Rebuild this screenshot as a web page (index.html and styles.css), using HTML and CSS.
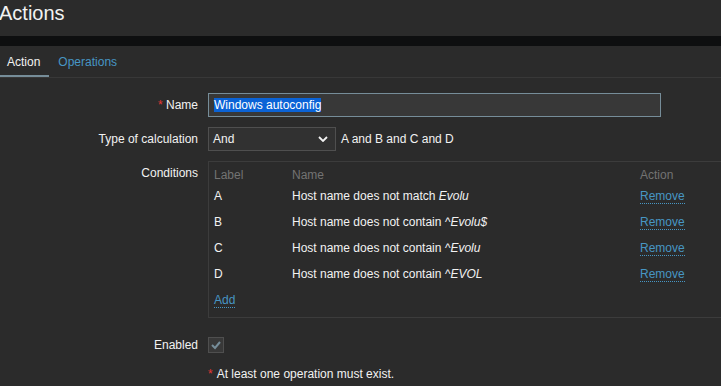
FILE: index.html
```html
<!DOCTYPE html>
<html lang="en">
<head>
    <meta charset="UTF-8">
    <meta name="viewport" content="width=device-width, initial-scale=1.0">
    <title>Actions</title>
    <link rel="stylesheet" href="styles.css">
</head>
<body>
    <header class="page-header">
        <h1 class="page-title">Actions</h1>
    </header>
    <div class="band"></div>
    <nav class="tabs">
        <a class="tab active">Action</a>
        <a class="tab">Operations</a>
    </nav>
    <form class="form">
        <div class="row">
            <label class="label"><span class="req">*</span> Name</label>
            <div class="field">
                <div class="input"><span class="sel">Windows autoconfig</span></div>
            </div>
        </div>
        <div class="row">
            <label class="label">Type of calculation</label>
            <div class="field">
                <div class="select">
                    <span>And</span>
                    <svg class="chevron" width="10" height="6" viewBox="0 0 10 6"><polyline points="1,1 5,5 9,1" fill="none" stroke="#f2f2f2" stroke-width="1.8"/></svg>
                </div>
                <span class="formula">A and B and C and D</span>
            </div>
        </div>
        <div class="row row-top">
            <label class="label label-top">Conditions</label>
            <div class="field">
                <div class="conditions">
                    <table>
                        <thead>
                            <tr><th class="c-label">Label</th><th class="c-name">Name</th><th class="c-action">Action</th></tr>
                        </thead>
                        <tbody>
                            <tr><td>A</td><td>Host name does not match <em>Evolu</em></td><td><a class="link">Remove</a></td></tr>
                            <tr><td>B</td><td>Host name does not contain <em>^Evolu$</em></td><td><a class="link">Remove</a></td></tr>
                            <tr><td>C</td><td>Host name does not contain <em>^Evolu</em></td><td><a class="link">Remove</a></td></tr>
                            <tr><td>D</td><td>Host name does not contain <em>^EVOL</em></td><td><a class="link">Remove</a></td></tr>
                            <tr><td colspan="3"><a class="link">Add</a></td></tr>
                        </tbody>
                    </table>
                </div>
            </div>
        </div>
        <div class="row row-enabled">
            <label class="label">Enabled</label>
            <div class="field">
                <span class="checkbox">
                    <svg width="14" height="14" viewBox="0 0 14 14"><polyline points="3,7 6,10 11,4" fill="none" stroke="#768d99" stroke-width="2"/></svg>
                </span>
            </div>
        </div>
        <div class="row row-note">
            <span class="label"></span>
            <div class="field note"><span class="req">*</span> At least one operation must exist.</div>
        </div>
    </form>
</body>
</html>
```

FILE: styles.css
```css
* {
    margin: 0;
    padding: 0;
    box-sizing: border-box;
}
body {
    font-family: "Liberation Sans", Arial, sans-serif;
    font-size: 12px;
    line-height: 14px;
    color: #f2f2f2;
    background: #2b2b2b;
    overflow: hidden;
    width: 721px;
    height: 386px;
}
.page-header {
    height: 36px;
    padding-top: 1px;
}
.page-title {
    font-size: 20px;
    line-height: 24px;
    font-weight: normal;
    margin-left: -1px;
}
.band {
    height: 10px;
    background: #0e0f10;
}
.tabs {
    display: flex;
    margin-left: -2px;
    border-bottom: 1px solid #383838;
}
.tab {
    padding: 9px 9px 6px;
    border-bottom: 2px solid transparent;
    color: #4796c4;
}
.tab.active {
    color: #f2f2f2;
    border-bottom-color: #768d99;
}
.form {
    padding-top: 15px;
}
.row {
    display: flex;
    align-items: center;
    margin-bottom: 10px;
}
.row-top {
    align-items: flex-start;
}
.label {
    width: 198px;
    text-align: right;
    flex-shrink: 0;
}
.label-top {
    padding-top: 5px;
}
.req {
    color: #e33734;
}
.field {
    margin-left: 10px;
    display: flex;
    align-items: center;
    gap: 5px;
}
.input {
    width: 453px;
    height: 24px;
    border: 1px solid #768d99;
    background: #383838;
    padding: 4px 5px;
}
.sel {
    background: #0b63d6;
    color: #fff;
}
.select {
    width: 128px;
    height: 24px;
    border: 1px solid #4f4f4f;
    background: #313131;
    padding: 4px 5px 4px 4px;
    display: flex;
    align-items: center;
    justify-content: space-between;
}
.chevron {
    margin-right: 2px;
}
.conditions {
    width: 540px;
    border: 1px solid #3c3c3c;
    padding: 0 5px 4px;
}
table {
    border-collapse: collapse;
    width: 100%;
}
th {
    font-weight: normal;
    text-align: left;
    color: #737373;
    padding: 6px 0 1px;
}
td {
    padding: 6px 0;
    white-space: nowrap;
}
.c-label {
    width: 78px;
}
.c-name {
    width: 348px;
}
em {
    font-style: italic;
}
.link {
    color: #4796c4;
    border-bottom: 1px dotted #4796c4;
}
.row-enabled {
    margin-top: 15px;
    height: 24px;
}
.checkbox {
    width: 16px;
    height: 16px;
    border: 1px solid #4f4f4f;
    background: #383838;
    display: flex;
    align-items: center;
    justify-content: center;
}
.row-note {
    margin-top: 4px;
}
.note {
    gap: 4px;
}
```
